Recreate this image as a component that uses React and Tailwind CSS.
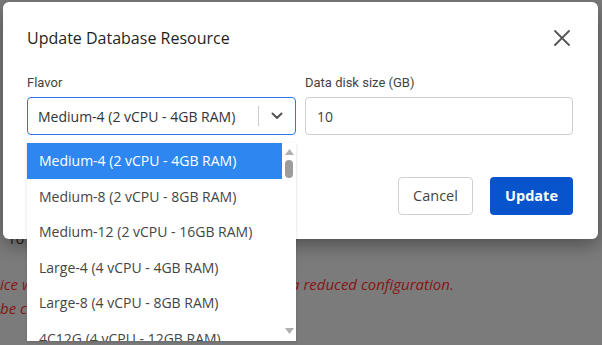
import React from "react";

const flavors = [
  "Medium-4 (2 vCPU - 4GB RAM)",
  "Medium-8 (2 vCPU - 8GB RAM)",
  "Medium-12 (2 vCPU - 16GB RAM)",
  "Large-4 (4 vCPU - 4GB RAM)",
  "Large-8 (4 vCPU - 8GB RAM)",
  "4C12G (4 vCPU - 12GB RAM)",
];

function FlavorList() {
  return (
    <div className="absolute left-0 top-[69px] w-[269px] h-[198px] bg-white flex overflow-hidden shadow-[0_1px_3px_rgba(0,0,0,0.15)] font-['Open_Sans',sans-serif]">
      <ul className="flex-1 flex flex-col">
        {flavors.map((f, i) => (
          <li
            key={f}
            className={
              "h-[35.5px] shrink-0 flex items-center pl-[12px] text-[14px] whitespace-nowrap " +
              (i === 0 ? "bg-[#2e87f1] text-white" : "text-[#454545]")
            }
          >
            {f}
          </li>
        ))}
      </ul>
      <div className="w-[14px] flex flex-col items-center pt-[6px] pb-[7px]">
        <svg width="9" height="6" viewBox="0 0 9 6"><path d="M0 6 L4.5 0 L9 6 Z" fill="#b0b0b0" /></svg>
        <div className="mt-[5px] w-[8px] h-[18px] rounded-full bg-[#9c9c9c]" />
        <div className="flex-1" />
        <svg width="9" height="6" viewBox="0 0 9 6"><path d="M0 0 L4.5 6 L9 0 Z" fill="#b0b0b0" /></svg>
      </div>
    </div>
  );
}

export default function App() {
  return (
    <div className="relative w-[602px] h-[345px] overflow-hidden bg-[#7b7b7b] font-['Open_Sans',sans-serif]">
      {/* page behind the overlay */}
      <div className="pt-[228px] flex flex-col">
        <div className="pl-[8px] text-[14px] text-[#1a1a1a] whitespace-nowrap">To the selected instance</div>
        <div className="mt-[24px] flex italic text-[15px] text-[#8a1414] whitespace-nowrap">
          <span className="w-[291px] overflow-hidden">ice will be restarted and temporarily run with</span>
          <span>a reduced configuration.</span>
        </div>
        <div className="mt-[1px] italic text-[15px] text-[#8a1414] whitespace-nowrap">be changed back afterwards.</div>
      </div>

      {/* dialog */}
      <div className="absolute left-[3px] top-[2px] w-[595px] h-[237px] bg-white rounded-[6px] shadow-[0_6px_18px_rgba(0,0,0,0.35)] pl-[24px] pr-[24px] pt-[24px]">
        <div className="flex items-center justify-between">
          <h2 className="text-[16px] leading-[24px] text-[#1f1f1f]">Update Database Resource</h2>
          <svg width="16" height="16" viewBox="0 0 16 16" className="mr-[4px]">
            <path d="M1 1 L15 15 M15 1 L1 15" stroke="#555" strokeWidth="1.8" strokeLinecap="round" />
          </svg>
        </div>

        <div className="mt-[24px] grid grid-cols-[269px_268px] gap-x-[9px] font-['Roboto',sans-serif]">
          <div className="relative">
            <label className="block text-[13px] leading-[18px] text-[#444]">Flavor</label>
            <div className="mt-[5px] h-[38px] rounded-[4px] border-[1.5px] border-[#2a78e4] flex items-center">
              <span className="flex-1 pl-[10px] text-[14px] text-[#333] font-['Open_Sans',sans-serif] whitespace-nowrap">
                Medium-4 (2 vCPU - 4GB RAM)
              </span>
              <div className="w-px h-[20px] bg-[#ccc]" />
              <div className="w-[36px] flex justify-center">
                <svg width="12" height="8" viewBox="0 0 12 8">
                  <path d="M1.5 1.5 L6 6 L10.5 1.5" stroke="#555" strokeWidth="2" fill="none" strokeLinecap="round" strokeLinejoin="round" />
                </svg>
              </div>
            </div>
            <FlavorList />
          </div>
          <div>
            <label className="block text-[13px] leading-[18px] text-[#444]">Data disk size (GB)</label>
            <div className="mt-[5px] h-[38px] rounded-[4px] border border-[#cfcfcf] flex items-center pl-[11px] text-[14px] text-[#444] font-['Open_Sans',sans-serif]">
              10
            </div>
          </div>
        </div>

        <div className="mt-[42px] flex justify-end gap-[17px] pr-[1px]">
          <button className="w-[75px] h-[38px] rounded-[4px] border border-[#cfcfcf] bg-white text-[14.5px] text-[#444]">
            Cancel
          </button>
          <button className="w-[83px] h-[38px] rounded-[4px] bg-[#0754cc] text-[14.5px] font-bold text-white">
            Update
          </button>
        </div>
      </div>
    </div>
  );
}
